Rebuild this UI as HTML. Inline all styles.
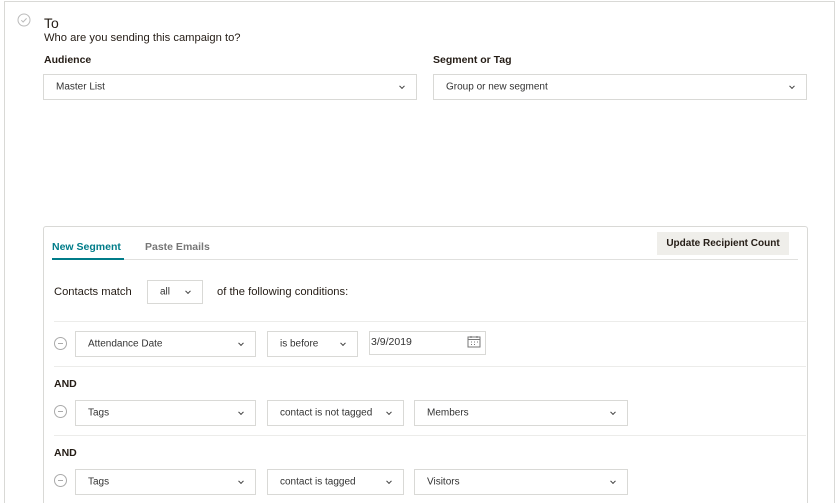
<!DOCTYPE html><html><head><style>
html,body{margin:0;width:840px;height:503px;overflow:hidden}
body{background:#fff;font-family:"Liberation Sans",sans-serif;color:#241c15;position:relative}
.a{position:absolute}
.sel{position:absolute;border:1px solid #d9d9d6;box-sizing:border-box;font-size:10px;color:#333;background:#fff}
.sel span{position:absolute;left:12px;top:50%;transform:translateY(-50%)}
.sel i{position:absolute;right:12px;top:50%;width:3px;height:3px;border-right:1.2px solid #444;border-bottom:1.2px solid #444;transform:translateY(-70%) rotate(45deg)}
.b{font-weight:bold;font-size:10.5px}
.m{position:absolute;width:11px;height:11px;border:1px solid #aaa;border-radius:50%}
.m:after{content:"";position:absolute;left:3px;right:3px;top:5px;height:1px;background:#aaa}
.hl{position:absolute;height:1px;background:#ececea}
</style></head><body>
<div class="a" style="left:4px;top:1px;width:829px;height:510px;border:1px solid #d9d9d6;border-bottom:none"></div>
<svg class="a" style="left:17px;top:13px" width="14" height="14"><circle cx="7" cy="7" r="6" fill="none" stroke="#bbb"/><path d="M4.3 7.2l1.8 1.8 3.5-3.6" fill="none" stroke="#bbb"/></svg>
<div class="a" style="left:44px;top:15px;font-size:14px">To</div>
<div class="a" style="left:44px;top:32px;font-size:11.2px">Who are you sending this campaign to?</div>
<div class="a b" style="left:44px;top:54px">Audience</div>
<div class="a b" style="left:433px;top:54px">Segment or Tag</div>
<div class="sel" style="left:43px;top:74px;width:374px;height:26px"><span>Master List</span><i></i></div>
<div class="sel" style="left:433px;top:74px;width:374px;height:26px"><span>Group or new segment</span><i></i></div>
<div class="a" style="left:43px;top:226px;width:763px;height:290px;border:1px solid #d9d9d6;border-radius:3px"></div>
<div class="a" style="left:52px;top:241px;font-size:10.5px;font-weight:bold;color:#007c89">New Segment</div>
<div class="a" style="left:145px;top:241px;font-size:10.5px;font-weight:bold;color:#777">Paste Emails</div>
<div class="hl" style="left:52px;top:259px;width:746px;background:#e0e0de"></div>
<div class="a" style="left:52px;top:258px;width:72px;height:2px;background:#007c89"></div>
<div class="a" style="left:657px;top:232px;width:132px;height:23px;background:#efeeea;font-size:10px;font-weight:bold;text-align:center;line-height:23px">Update Recipient Count</div>
<div class="a" style="left:54px;top:286px;font-size:11.2px">Contacts match</div>
<div class="sel" style="left:147px;top:280px;width:56px;height:24px"><span>all</span><i></i></div>
<div class="a" style="left:217px;top:286px;font-size:11.2px">of the following conditions:</div>
<div class="hl" style="left:54px;top:321px;width:752px"></div>
<div class="m" style="left:54px;top:337px"></div>
<div class="sel" style="left:75px;top:331px;width:181px;height:26px"><span>Attendance Date</span><i></i></div>
<div class="sel" style="left:267px;top:331px;width:91px;height:26px"><span>is before</span><i></i></div>
<div class="sel" style="left:369px;top:331px;width:117px;height:24px"><span style="left:1px;top:10px;font-size:10.5px">3/9/2019</span></div>
<svg class="a" style="left:467px;top:335px" width="14" height="13"><rect x="1" y="2" width="12" height="10" fill="none" stroke="#777"/><path d="M1 4.5h12M4 1v2M10 1v2M4 7h1M7 7h1M10 7h1M4 9.5h1M7 9.5h1" stroke="#777"/></svg>
<div class="hl" style="left:54px;top:366px;width:752px"></div>
<div class="a b" style="left:54px;top:378px">AND</div>
<div class="m" style="left:54px;top:405px"></div>
<div class="sel" style="left:75px;top:400px;width:181px;height:26px"><span>Tags</span><i></i></div>
<div class="sel" style="left:267px;top:400px;width:137px;height:26px"><span>contact is not tagged</span><i></i></div>
<div class="sel" style="left:414px;top:400px;width:214px;height:26px"><span>Members</span><i></i></div>
<div class="hl" style="left:54px;top:435px;width:752px"></div>
<div class="a b" style="left:54px;top:447px">AND</div>
<div class="m" style="left:54px;top:474px"></div>
<div class="sel" style="left:75px;top:469px;width:181px;height:26px"><span>Tags</span><i></i></div>
<div class="sel" style="left:267px;top:469px;width:137px;height:26px"><span>contact is tagged</span><i></i></div>
<div class="sel" style="left:414px;top:469px;width:214px;height:26px"><span>Visitors</span><i></i></div>
</body></html>
